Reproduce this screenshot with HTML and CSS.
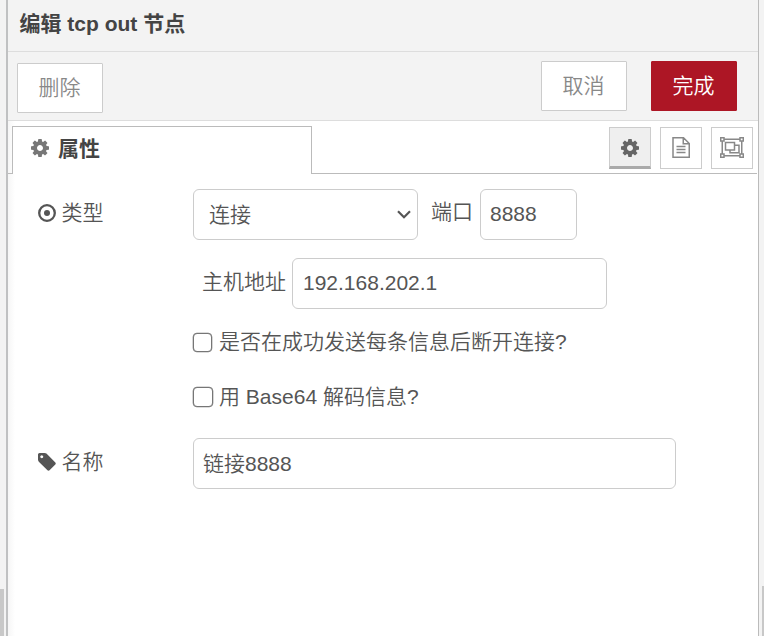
FILE: index.html
```html
<!DOCTYPE html>
<html lang="zh-CN">
<head>
<meta charset="utf-8">
<title>编辑 tcp out 节点</title>
<link rel="stylesheet" href="styles.css">
</head>
<body>
<svg class="defs" width="0" height="0">
  <symbol id="cog" viewBox="128 128 1536 1536"><path d="M1152 896q0-106-75-181t-181-75-181 75-75 181 75 181 181 75 181-75 75-181zm512-109v222q0 12-8 23t-20 13l-185 28q-19 54-39 91 35 50 107 138 10 12 10 25t-9 23q-27 37-99 108t-94 71q-12 0-26-9l-138-108q-44 23-91 38-16 136-29 186-7 28-36 28h-222q-14 0-24.5-8.5t-11.5-21.5l-28-184q-49-16-90-37l-141 107q-10 9-25 9-14 0-25-11-126-114-165-168-7-10-7-23 0-12 8-23 15-21 51-66.5t54-70.5q-27-50-41-99l-183-27q-13-2-21-12.5t-8-23.5v-222q0-12 8-23t19-13l186-28q14-46 39-92-40-57-107-138-10-12-10-24 0-10 9-23 26-36 98.5-107.5t94.5-71.5q13 0 26 10l138 107q44-23 91-38 16-136 29-186 7-28 36-28h222q14 0 24.5 8.5t11.5 21.5l28 184q49 16 90 37l142-107q9-9 24-9 13 0 25 10 129 119 165 170 7 8 7 22 0 12-8 23-15 21-51 66.5t-54 70.5q26 50 41 98l183 28q13 2 21 12.5t8 23.5z"/></symbol>
</svg>
<div class="workspace">
  <aside class="gutter gutter-left"><div class="scroll-thumb"></div></aside>
  <main class="tray">
    <header class="tray-header">编辑 tcp out 节点</header>
    <div class="toolbar">
      <button class="btn btn-delete">删除</button>
      <button class="btn">取消</button>
      <button class="btn btn-primary">完成</button>
    </div>
    <nav class="tabs">
      <div class="tab"><svg class="icon"><use href="#cog"/></svg><span>属性</span></div>
      <div class="tab-buttons">
        <button class="icon-btn selected"><svg class="icon"><use href="#cog"/></svg></button>
        <button class="icon-btn"><svg class="icon-doc" viewBox="0 0 18 21"><path d="M1 .75h10.500l5.750 5.750v13.750h-16.250zM11.250 .75v6h6M4.500 9.500h9M4.500 12.500h9M4.500 15.500h9"/></svg></button>
        <button class="icon-btn"><svg class="icon-group" viewBox="0 0 24 21"><path d="M4 2.250h16M4 18.750h16M2.250 4v13M21.750 4v13"/><path d="M.7 .7h3.300v3.300h-3.300zM20 .7h3.300v3.300h-3.300zM.7 17h3.300v3.300h-3.300zM20 17h3.300v3.300h-3.300zM5.500 5.500h9v7.500h-9zM14.500 8.300h4.500v7.500h-9v-2.800"/></svg></button>
      </div>
    </nav>
    <form class="form">
      <div class="row">
        <label class="name"><svg class="icon" viewBox="0 0 18 18"><circle cx="9" cy="9" r="7.800" fill="none" stroke="currentColor" stroke-width="2.300"/><circle cx="9" cy="9" r="3"/></svg>类型</label>
        <div class="field select"><span>连接</span><svg class="chevron" viewBox="0 0 14 9"><path d="M1 1.200l6 6 6-6"/></svg></div>
        <label class="port-label">端口</label>
        <div class="field port">8888</div>
      </div>
      <div class="row host-row">
        <label class="host-label">主机地址</label>
        <div class="field host">192.168.202.1</div>
      </div>
      <label class="check-row"><span class="box"></span><span>是否在成功发送每条信息后断开连接?</span></label>
      <label class="check-row second"><span class="box"></span><span>用 Base64 解码信息?</span></label>
      <div class="row name-row">
        <label class="name"><svg class="icon" viewBox="128 128 1536 1536"><path d="M576 448q0-53-37.5-90.5t-90.5-37.5-90.5 37.5-37.5 90.5 37.5 90.5 90.5 37.5 90.5-37.5 37.5-90.5zm1067 576q0 53-37 90l-491 492q-39 37-91 37-53 0-90-37l-715-716q-38-37-64.500-101t-26.500-117v-416q0-52 38-90t90-38h416q53 0 117 26.500t102 64.500l715 714q37 39 37 91z"/></svg>名称</label>
        <div class="field node-name">链接8888</div>
      </div>
    </form>
  </main>
  <aside class="gutter gutter-right"><div class="scroll-thumb"></div></aside>
</div>
</body>
</html>
```
FILE: styles.css
```css
* { box-sizing: border-box; }
body {
  margin: 0;
  font: 350 21px/30px "Liberation Sans", "Noto Sans CJK SC", sans-serif;
  color: #555;
  background: #f3f3f3;
}
button { font: inherit; padding: 0; }
svg { display: block; flex: none; fill: currentColor; }
.defs { position: absolute; }
.workspace { display: flex; height: 636px; overflow: hidden; }
.gutter { display: flex; flex-direction: column; justify-content: flex-end; background: #f3f3f3; }
.gutter-left { width: 8px; border-right: 2px solid #c0c1c2; }
.gutter-right { width: 6px; border-left: 1px solid #bbb; align-items: flex-end; }
.scroll-thumb { width: 4px; height: 47px; background: #c8c8c8; }
.gutter-right .scroll-thumb { width: 2px; height: 50px; }
.tray { width: 750px; background: linear-gradient(90deg, #f6f6f6, #fff 7px); }
.tray-header {
  height: 52px;
  padding: 9px 11.500px;
  border-bottom: 1px solid #ddd;
  background: #f3f3f3;
  font-weight: 700;
  color: #444;
}
.toolbar {
  display: flex;
  height: 69px;
  padding: 9px 21px 0 9px;
  border-bottom: 1px solid #ddd;
  background: #f3f3f3;
}
.btn {
  width: 86px;
  height: 50px;
  padding-right: 1px;
  border: 1px solid #ccc;
  border-radius: 1px;
  background: #fff;
  color: #888;
}
.btn-delete { margin: 2px auto 0 0; }
.btn-primary { margin-left: 24px; border-color: #ad1625; background: #ad1625; color: #fff; }
.tabs {
  display: flex;
  align-items: flex-end;
  height: 53px;
  margin-right: 1px;
  background: linear-gradient(#bbb, #bbb) bottom / 100% 1px no-repeat;
}
.tab {
  display: flex;
  gap: 9px;
  width: 300px;
  height: 48px;
  margin-left: 4px;
  padding: 7px 18px;
  border: 1px solid #bbb;
  border-bottom: 0;
  background: #fff;
  font-weight: 700;
  color: #444;
}
.icon { width: 18px; height: 18px; }
.tab .icon { margin-top: 5px; color: #777; }
.tab-buttons { display: flex; gap: 9px; margin: 0 4px 5px auto; }
.icon-btn {
  display: flex;
  align-items: center;
  justify-content: center;
  width: 42px;
  height: 42px;
  border: 1px solid #ccc;
  background: #fff;
  color: #888;
}
.selected { padding-top: 1px; border-bottom: 3px solid #aaa; background: #efefef; color: #666; }
.icon-doc { width: 18px; height: 21px; margin-bottom: 1px; }
.icon-group { width: 24px; height: 21px; margin-bottom: 1px; }
.icon-doc, .icon-group { fill: none; stroke: #888; stroke-width: 1.500; }
.form { padding: 15px 0 0 30px; }
.row { display: flex; height: 51px; }
.name { display: flex; align-items: center; gap: 6px; width: 155px; height: 48px; }
.name .icon { margin: 0 0 1px -.5px; }
.field {
  display: flex;
  align-items: center;
  height: 51px;
  padding: 0 10px 2px;
  border: 1px solid #ccc;
  border-radius: 6px;
  background: #fff;
}
.select { width: 225px; justify-content: space-between; padding: 0 6px 0 15px; }
.chevron { width: 14px; height: 9px; fill: none; stroke: #555; stroke-width: 2.2; }
.port-label { width: 49px; margin: 8px 0 0 13px; }
.port { width: 97px; padding-left: 9px; }
.host-row { margin: 18px 0 0 165px; }
.host-label { width: 89px; margin-top: 9px; text-indent: -1px; }
.host { width: 315px; }
.check-row { display: flex; align-items: center; gap: 7px; height: 30px; margin: 18px 0 0 155px; }
.second { gap: 6px; margin-top: 25px; }
.box { width: 19px; height: 19px; border: 1.500px solid #767676; border-radius: 4px; background: #fff; box-shadow: 0 0 0 .3px #767676; }
.second .box { width: 20px; height: 20px; }
.name-row { margin-top: 26px; }
.node-name { width: 483px; padding: 1px 9px 0; }
```
